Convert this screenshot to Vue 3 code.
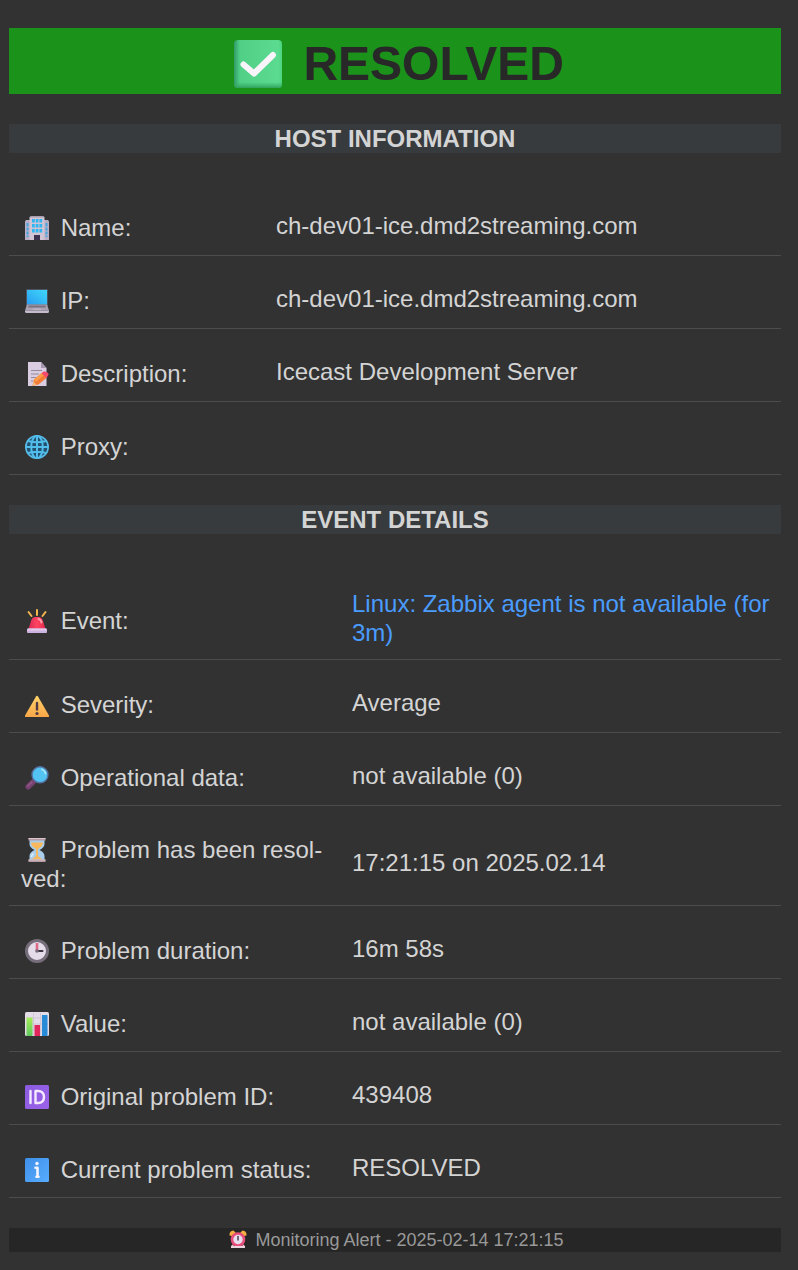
<script setup>
const hostRows = [
  { icon: 'building', label: 'Name:', value: 'ch-dev01-ice.dmd2streaming.com' },
  { icon: 'laptop', label: 'IP:', value: 'ch-dev01-ice.dmd2streaming.com' },
  { icon: 'memo', label: 'Description:', value: 'Icecast Development Server' },
  { icon: 'globe', label: 'Proxy:', value: '' },
]

const eventRows = [
  { icon: 'siren', label: 'Event:', value: 'Linux: Zabbix agent is not available (for 3m)', link: true },
  { icon: 'warning', label: 'Severity:', value: 'Average' },
  { icon: 'search', label: 'Operational data:', value: 'not available (0)' },
  { icon: 'hourglass', label: 'Problem has been resol\u00adved:', value: '17:21:15 on 2025.02.14' },
  { icon: 'clock', label: 'Problem duration:', value: '16m 58s' },
  { icon: 'chart', label: 'Value:', value: 'not available (0)' },
  { icon: 'id', label: 'Original problem ID:', value: '439408' },
  { icon: 'info', label: 'Current problem status:', value: 'RESOLVED' },
]

const sections = [
  { key: 'host', title: 'HOST INFORMATION', rows: hostRows },
  { key: 'event', title: 'EVENT DETAILS', rows: eventRows },
]
</script>

<template>
  <svg class="sprite" aria-hidden="true">
    <defs>
      <linearGradient id="g-screen" x1="0" y1="1" x2="1" y2="0">
        <stop offset="0" stop-color="#2a9df0" /><stop offset="1" stop-color="#3fd8fa" />
      </linearGradient>
      <linearGradient id="g-warn" x1="0" y1="0" x2="0" y2="1">
        <stop offset="0" stop-color="#ffd36a" /><stop offset="1" stop-color="#f9a648" />
      </linearGradient>
      <linearGradient id="g-siren" x1="0" y1="0" x2="1" y2="0">
        <stop offset="0" stop-color="#d92a58" /><stop offset=".5" stop-color="#ff4460" /><stop offset="1" stop-color="#e52a4e" />
      </linearGradient>
      <linearGradient id="g-id" x1="0" y1="0" x2="1" y2="1">
        <stop offset="0" stop-color="#8a5be0" /><stop offset="1" stop-color="#9b62e8" />
      </linearGradient>
      <linearGradient id="g-info" x1="0" y1="0" x2="1" y2="1">
        <stop offset="0" stop-color="#3e8fe8" /><stop offset="1" stop-color="#58adff" />
      </linearGradient>
      <linearGradient id="g-check" x1="0" y1="0" x2="1" y2="0">
        <stop offset="0" stop-color="#319b68" /><stop offset=".12" stop-color="#50cf86" /><stop offset=".92" stop-color="#5bdb90" /><stop offset="1" stop-color="#4bd47d" />
      </linearGradient>
      <linearGradient id="g-check-base" x1="0" y1="0" x2="0" y2="1">
        <stop offset="0" stop-color="#35ad65" stop-opacity="0" /><stop offset="1" stop-color="#2fa05c" />
      </linearGradient>
      <linearGradient id="g-green" x1="0" y1="0" x2="0" y2="1">
        <stop offset="0" stop-color="#a5ee5a" /><stop offset="1" stop-color="#5fc75e" />
      </linearGradient>
    </defs>

    <symbol id="check" viewBox="0 0 48 48">
      <rect width="48" height="48" rx="4" fill="url(#g-check)" />
      <path d="M0 42h48v2a4 4 0 0 1-4 4H4a4 4 0 0 1-4-4z" fill="url(#g-check-base)" />
      <path d="M9.500 24.500L20 33.500L39 15" fill="none" stroke="#f8f4fa" stroke-width="6" stroke-linecap="round" stroke-linejoin="round" />
    </symbol>

    <symbol id="building" viewBox="0 0 24 24">
      <path d="M0 5.500L1 4h5v20H0zM18 4h5l1 1.500V24h-6z" fill="#b9adc3" />
      <path d="M4.500 1.500L6 0h12l1.500 1.500V24h-15z" fill="#d0c4d5" />
      <path d="M4.500 1.500L6 0h12l1.500 1.500z" fill="#a99faf" />
      <path d="M1.500 7h2v14h-2zM20.500 7h2v14h-2z" fill="#45a6df" />
      <path d="M7 3h2.800v3.500H7zM10.700 3h2.800v3.500h-2.800zM14.400 3h2.800v3.500h-2.800zM7 8h2.800v3.500H7zM10.700 8h2.800v3.500h-2.800zM14.400 8h2.800v3.500h-2.800zM7 13h2.800v3.500H7zM10.700 13h2.800v3.500h-2.800zM14.400 13h2.800v3.500h-2.800z" fill="#30b6f1" />
      <path d="M9 19h6v5H9z" fill="#3e3150" />
      <path d="M0 11h4.500M0 15h4.500M0 19h4.500M19.500 11H24M19.500 15H24M19.500 19H24" stroke="#c1b3cc" />
    </symbol>

    <symbol id="laptop" viewBox="0 0 24 24">
      <rect x="1" y="0" width="22" height="17" rx="1" fill="#4c5361" />
      <rect x="2" y="1" width="20" height="14.500" fill="url(#g-screen)" />
      <path d="M2 15.500h20l2 6H0z" fill="#aaa2b3" />
      <path d="M3.500 16.500h17l.5 2H3z" fill="#777181" />
      <path d="M8.500 19.500h7l1 1.500h-9z" fill="#bdb3c5" />
      <path d="M0 21.500h24v1a1.500 1.500 0 0 1-1.500 1.500h-21A1.500 1.500 0 0 1 0 22.500z" fill="#c4bccd" />
    </symbol>

    <symbol id="memo" viewBox="0 0 24 24">
      <path d="M3 0h13l5.500 6v18H3z" fill="#dacde1" />
      <path d="M16 0v6h5.500z" fill="#a599b0" />
      <path d="M6 8.500h11M6 12h8M6 15.500h5M6 19h2" stroke="#948ca0" stroke-width="1.200" />
      <path d="M9 17.500l8.500-7 4.500 5-8.500 7-6 1.500z" fill="#f47b35" />
      <path d="M9 17.500l8.500-7 2 2.200-8.500 7z" fill="#ff9c48" />
      <path d="M16.500 11.300l2.300-1.800q3.500-.6 5 2.700l-2.300 3.800z" fill="#f2496d" />
      <path d="M7.500 24l1.200-4.500 3 3.500z" fill="#f2b97f" />
    </symbol>

    <symbol id="globe" viewBox="0 0 24 24">
      <circle cx="12" cy="12" r="11.200" fill="#24506f" stroke="#58bce8" stroke-width="1.600" />
      <g fill="none" stroke="#50bdeb" stroke-width="2">
        <ellipse cx="12" cy="12" rx="5.800" ry="11.200" />
        <path d="M12 1v22M1 12h22M3 6q9 2.500 18 0M3 18q9-2.500 18 0" />
      </g>
    </symbol>

    <symbol id="siren" viewBox="0 0 24 24">
      <path d="M12 1v5M3.500 3L6.500 7M20.500 3L17.500 7" stroke="#f4b64e" stroke-width="2" stroke-linecap="round" />
      <path d="M3.500 20L6 12q1-4 4.500-4h3q3.500 0 4.500 4l2.500 8z" fill="url(#g-siren)" />
      <path d="M13.500 10q2.500.5 3 3.500" stroke="#ff9cac" stroke-width="2" fill="none" stroke-linecap="round" />
      <rect x="2" y="19.500" width="20" height="4.500" rx="1" fill="#cbb2e1" />
      <path d="M3 19.500h18l1 2H2z" fill="#e1caea" />
    </symbol>

    <symbol id="warning" viewBox="0 0 24 24">
      <path d="M11 3.500q1-1.500 2 0L24 22.500q.5 1.500-1 1.500H1Q-.5 24 0 22.500z" fill="url(#g-warn)" />
      <path d="M12 10v6.500" stroke="#503a45" stroke-width="2.400" stroke-linecap="round" />
      <circle cx="12" cy="20.500" r="1.600" fill="#503a45" />
    </symbol>

    <symbol id="search" viewBox="0 0 24 24">
      <path d="M3.200 20.800L8 16" stroke="#75416e" stroke-width="5.500" stroke-linecap="round" />
      <path d="M3 20l4-4" stroke="#93598a" stroke-width="1.500" stroke-linecap="round" />
      <circle cx="15" cy="8.800" r="8" fill="#52c3f3" stroke="#5472a2" stroke-width="1.400" />
      <path d="M17 3.500q3 1 3.500 4" stroke="#a1e8ff" stroke-width="1.800" fill="none" stroke-linecap="round" />
    </symbol>

    <symbol id="hourglass" viewBox="0 0 24 24">
      <path d="M4.500 2h15v4q0 3.500-5 6 5 2.500 5 6v4h-15v-4q0-3.500 5-6-5-2.500-5-6z" fill="#a9cdea" />
      <path d="M6 4.500h12q0 3.500-5 6.500v7l4.500 3.500h-11L11 18v-7Q6 8 6 4.500z" fill="#f8b85e" />
      <path d="M6.500 19q0-2 2-3.500" stroke="#e4f4ff" stroke-width="1.500" fill="none" />
      <path d="M3.500 0h17v2.500h-17zM3.500 21.500h17V24h-17z" fill="#b49ba6" />
      <path d="M3.500 0h17v1h-17zM3.500 21.500h17v1h-17z" fill="#dcc6c8" />
    </symbol>

    <symbol id="clock" viewBox="0 0 24 24">
      <circle cx="12" cy="12" r="10.500" fill="#e4dce9" stroke="#756d7a" stroke-width="3" />
      <path d="M12 12V4" stroke="#dd6a86" stroke-width="2.600" />
      <path d="M12 12h5.500" stroke="#3c3542" stroke-width="2" stroke-linecap="round" />
      <circle cx="12" cy="12" r="1.800" fill="#796b7d" />
    </symbol>

    <symbol id="chart" viewBox="0 0 24 24">
      <rect width="24" height="24" rx="1.500" fill="#e5dcea" />
      <path d="M1 6h22M1 12h22M1 18h22M8.500 1v22M15.500 1v22" stroke="#cfc6d6" />
      <path d="M1.500 5.500h6V24h-6z" fill="url(#g-green)" />
      <path d="M9.500 13h5.500v11H9.500z" fill="#df275e" />
      <path d="M17 3h5.500v21H17z" fill="#278bd8" />
    </symbol>

    <symbol id="id" viewBox="0 0 24 24">
      <rect width="24" height="24" rx="1.500" fill="url(#g-id)" />
      <path d="M5.500 6v12M10.500 6v12h2.500q6 0 6-6t-6-6z" fill="none" stroke="#f4e9ff" stroke-width="2.400" stroke-linecap="round" stroke-linejoin="round" />
    </symbol>

    <symbol id="info" viewBox="0 0 24 24">
      <rect width="24" height="24" rx="1.500" fill="url(#g-info)" />
      <circle cx="12" cy="5.500" r="1.700" fill="#f5f4ff" />
      <path d="M10.500 9.800h2v9M11.500 18.800h2" fill="none" stroke="#f5f4ff" stroke-width="2.600" stroke-linecap="round" stroke-linejoin="round" />
    </symbol>

    <symbol id="alarm" viewBox="0 0 18 18">
      <path d="M4 15l-1 2M14 15l1 2" stroke="#efb8c5" stroke-width="2" />
      <path d="M0.500 5.500Q0 1 4.500.5L7 3 3 6zM17.500 5.500Q18 1 13.500.5L11 3l4 3z" fill="#f4ac43" />
      <circle cx="9" cy="9.500" r="6" fill="#eadff0" stroke="#e84e7b" stroke-width="2.600" />
      <path d="M9 6.500v3.500" stroke="#4f3f54" stroke-width="1.500" stroke-linecap="round" />
      <path d="M2 16h14v2H2z" fill="#e9d3df" />
    </symbol>
  </svg>

  <main class="alert">
    <h1 class="status"><svg class="status-icon" aria-hidden="true"><use href="#check" /></svg> RESOLVED</h1>

    <section v-for="section in sections" :key="section.key" class="section">
      <h2 class="section-title">{{ section.title }}</h2>
      <table class="details" :class="section.key">
        <tbody>
          <tr v-for="row in section.rows" :key="row.label">
            <th scope="row"><svg class="icon" aria-hidden="true"><use :href="'#' + row.icon" /></svg> {{ row.label }}</th>
            <td><a v-if="row.link" href="#">{{ row.value }}</a><template v-else>{{ row.value }}</template></td>
          </tr>
        </tbody>
      </table>
    </section>

    <footer class="footer"><svg class="footer-icon" aria-hidden="true"><use href="#alarm" /></svg> Monitoring Alert - 2025-02-14 17:21:15</footer>
  </main>
</template>

<style>
body {
  background: #323232;
}
</style>

<style scoped>
.sprite {
  position: absolute;
  width: 0;
  height: 0;
}

.alert {
  padding: 28px 17px 18px 9px;
  color: #d4d4d4;
  font-family: "Liberation Sans", Arial, sans-serif;
  font-size: 24px;
  line-height: 29px;
}

.status {
  margin: 0;
  padding: 7px 0 1px;
  background: #1b931b;
  color: #282828;
  font-size: 48px;
  line-height: 58px;
  text-align: center;
}

.status-icon {
  width: 48px;
  height: 48px;
  margin: 0 8px;
  vertical-align: -8px;
}

.section-title {
  margin: 30px 0;
  background: #383b3e;
  font-size: 24px;
  line-height: 29px;
  text-align: center;
}

.details {
  width: 100%;
  border-spacing: 0;
  table-layout: fixed;
}

.details tr {
  height: 73px;
}

.details th,
.details td {
  padding: 25px 6px 12px 12px;
  border-bottom: 1px solid #4c4c4c;
  vertical-align: middle;
  text-align: left;
  font-weight: 400;
}

.host th {
  width: 237px;
}

.event th {
  width: 313px;
}

.details a {
  color: #4a9cff;
  text-decoration: none;
}

.icon {
  width: 24px;
  height: 24px;
  margin: 7px 5px 0 4px;
  vertical-align: -4px;
}

.footer {
  margin-top: 30px;
  background: #262626;
  color: #999;
  font-size: 18px;
  line-height: 24px;
  text-align: center;
}

.footer-icon {
  width: 18px;
  height: 18px;
  margin: 0 3px;
  vertical-align: -2px;
}
</style>
